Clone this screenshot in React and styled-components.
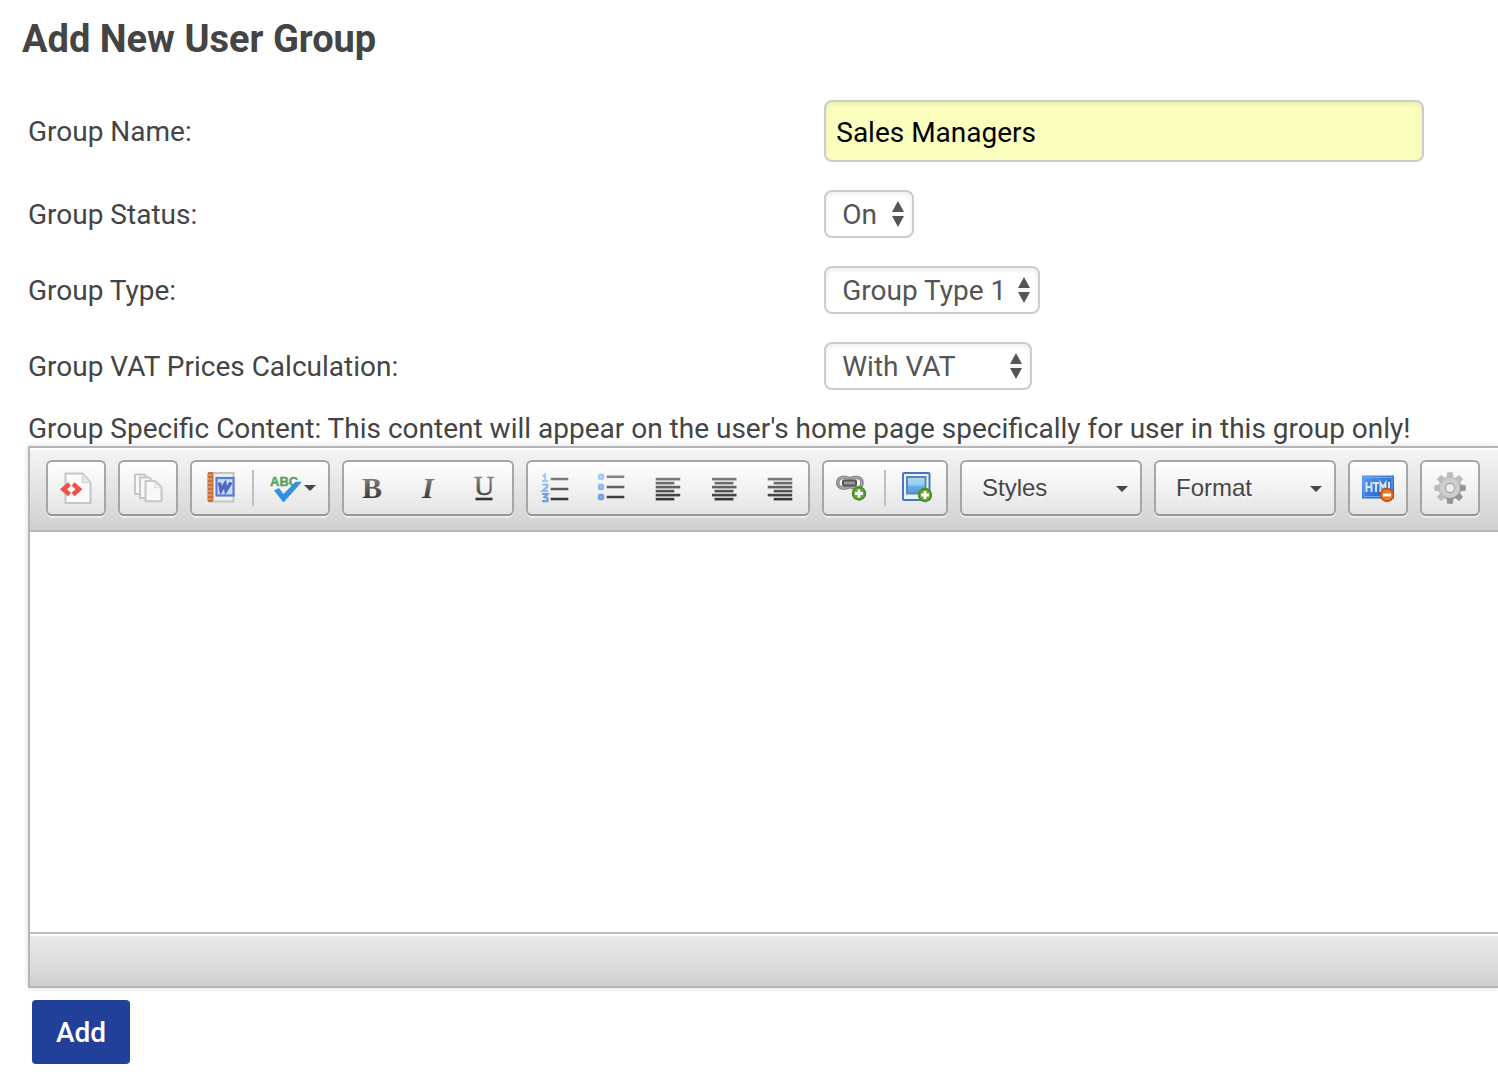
import React, { useState } from "react";
import styled, { createGlobalStyle } from "styled-components";

const statusOptions = ["On", "Off"];
const typeOptions = ["Group Type 1", "Group Type 2"];
const vatOptions = ["With VAT", "Without VAT"];
const styleOptions = ["Styles", "Big", "Small"];
const formatOptions = ["Format", "Normal", "Heading 1"];

const Ink = ({ id }) => (
  <linearGradient id={id} gradientUnits="userSpaceOnUse" x1="0" y1="4" x2="0" y2="30">
    <stop offset="0" stopColor="#858585" />
    <stop offset="1" stopColor="#2c2c2c" />
  </linearGradient>
);

const Badge = ({ cx, cy, minus }) => (
  <g>
    <circle cx={cx} cy={cy} r="7.2" fill={minus ? "#c9500f" : "#478a26"} />
    <circle cx={cx} cy={cy} r="5.6" fill={minus ? "#ee7a26" : "#66a838"} />
    <path
      d={minus ? `M${cx - 4} ${cy}h8` : `M${cx - 4} ${cy}h8M${cx} ${cy - 4}v8`}
      stroke="#fff"
      strokeWidth="2.8"
    />
  </g>
);

const SourceIcon = () => (
  <Icon viewBox="0 0 32 32">
    <path d="M5.5 1.500h17l8 9v20.500h-25z" fill="#fbfbfb" stroke="#c6c6c6" strokeWidth="2" />
    <path d="M22.500 2v8.500h8" fill="#e8e8e8" stroke="#d4d4d4" strokeWidth="1.400" />
    <path
      d="M9.500 12l-6 5.200 6 5.200M13 12l6 5.200-6 5.200"
      fill="none"
      stroke="#f0524a"
      strokeWidth="4.600"
    />
  </Icon>
);

const TemplatesIcon = () => (
  <Icon viewBox="0 0 32 32">
    <g fill="#f8f8f8" stroke="#c6c6c6" strokeWidth="2" strokeLinejoin="round">
      <path d="M3 2.500h9l4 4v15.500H3z" />
      <path d="M8 5.500h9l5 5v15.500H8z" />
      <path d="M13.500 9h9.500l6.500 6v14.300h-16z" />
      <path d="M23 9.500v6h6.500" fill="none" stroke="#dcdcdc" strokeWidth="1.400" />
    </g>
  </Icon>
);

const WordIcon = () => (
  <Icon viewBox="0 0 32 32">
    <rect x="5" y="1" width="24.500" height="28.500" fill="#f0f0f0" stroke="#c4c4c4" strokeWidth="2" />
    <rect x="3.500" y="0" width="6" height="30" rx="2" fill="#c4703d" />
    <path d="M3.500 3h5M3.500 7h5M3.500 11h5M3.500 15h5M3.500 19h5M3.500 23h5M3.500 27h5" stroke="#dc9a6f" strokeWidth="1.400" />
    <rect x="12.500" y="6" width="17" height="17.500" fill="#cddbf7" stroke="#5b7cd6" strokeWidth="2.200" />
    <path d="M15.500 10.500l1.500 8 4-6.500 1 6.500 5-8" fill="none" stroke="#4c69c8" strokeWidth="3.400" />
  </Icon>
);

const SpellIcon = () => (
  <Icon viewBox="0 0 32 32">
    <IconText x="0" y="14" $size="13" $weight="700" fill="#5c9f60" stroke="#5c9f60" strokeWidth=".4">
      ABC
    </IconText>
    <path d="M4 18.500l5-2.500 4.500 6L25.500 9.700h6.500L13.500 30.500z" fill="#3291e2" />
  </Icon>
);

const BoldIcon = () => (
  <Icon viewBox="0 0 32 32">
    <Ink id="ink-b" />
    <IconText x="6" y="26" $serif $size="30" $weight="700" fill="url(#ink-b)">
      B
    </IconText>
  </Icon>
);

const ItalicIcon = () => (
  <Icon viewBox="0 0 32 32">
    <Ink id="ink-i" />
    <IconText x="10" y="26" $serif $italic $size="30" $weight="700" fill="url(#ink-i)">
      I
    </IconText>
  </Icon>
);

const UnderlineIcon = () => (
  <Icon viewBox="0 0 32 32">
    <Ink id="ink-u" />
    <IconText x="6" y="23" $serif $size="28" $weight="400" fill="url(#ink-u)" stroke="url(#ink-u)" strokeWidth=".5">
      U
    </IconText>
    <path d="M7.500 27h17" stroke="#333" strokeWidth="2.600" />
  </Icon>
);

const NumberedIcon = () => (
  <Icon viewBox="0 0 32 32">
    <Ink id="ink-n" />
    <g fill="none" strokeWidth="2.200">
      <path d="M2.500 4.500l2.500-2v7M2 9h6" stroke="#a5c8f5" />
      <path d="M2.500 12.500h4.500l.5 2-5 4.500h5.500" stroke="#8fb8ee" />
      <path d="M2 22h5.500l-3 3.200 3 .8v3.200H2" stroke="#6f9fe2" />
    </g>
    <path d="M10.700 5.700h17.600v2.600h-17.600zM10.700 15.700h17.600v2.600h-17.600zM10.700 25.700h17.600v2.600h-17.600z" fill="url(#ink-n)" />
  </Icon>
);

const BulletedIcon = () => (
  <Icon viewBox="0 0 32 32">
    <Ink id="ink-l" />
    <g fill="none" strokeWidth="2.400">
      <rect x="3" y="2.700" width="4" height="4" rx="1" fill="#c9def9" stroke="#a5c8f5" />
      <rect x="3" y="13" width="4" height="4" rx="1" fill="#b0cdf4" stroke="#8fb8ee" />
      <rect x="3" y="23" width="4" height="4" rx="1" fill="#9cbfee" stroke="#6f9fe2" />
    </g>
    <path d="M10.700 3.400h17.600v2.600h-17.600zM10.700 13.700h17.600v2.600h-17.600zM10.700 23.700h17.600v2.600h-17.600z" fill="url(#ink-l)" />
  </Icon>
);

const alignLines = {
  left: [3.7, 3.7, 18.6],
  center: [4, 6.5, 19],
  right: [3.7, 9.7, 18.6],
};

const AlignIcon = ({ side }) => {
  const [long, short, width] = alignLines[side];
  return (
    <Icon viewBox="0 0 32 32">
      <Ink id={`ink-${side}`} />
      <g fill={`url(#ink-${side})`}>
        {[7, 15, 23].map(y => (
          <React.Fragment key={y}>
            <rect x={long} y={y - 1.2} width="24.5" height="2.6" />
            <rect x={short} y={y + 2.8} width={width} height="2.6" />
          </React.Fragment>
        ))}
      </g>
    </Icon>
  );
};

const LinkIcon = () => (
  <Icon viewBox="0 0 32 32">
    <g fill="none">
      <rect x="1.800" y="5.500" width="13" height="10.500" rx="5" stroke="#868686" strokeWidth="3.600" />
      <rect x="13" y="5.500" width="13" height="10.500" rx="5" stroke="#868686" strokeWidth="3.600" />
      <rect x="1.800" y="5.500" width="13" height="10.500" rx="5" stroke="#b4b4b4" strokeWidth="1" />
      <rect x="13" y="5.500" width="13" height="10.500" rx="5" stroke="#b4b4b4" strokeWidth="1" />
      <rect x="7" y="8.500" width="13" height="5" rx="1" fill="#999" stroke="#555" strokeWidth="2" />
    </g>
    <Badge cx={23} cy={21.5} />
  </Icon>
);

const ImageIcon = () => (
  <Icon viewBox="0 0 32 32">
    <linearGradient id="sky" x1="0" y1="0" x2="0" y2="1">
      <stop offset="0" stopColor="#a6dcf6" />
      <stop offset=".45" stopColor="#95d0f2" />
      <stop offset=".6" stopColor="#64aae4" />
      <stop offset="1" stopColor="#5b9fdf" />
    </linearGradient>
    <rect x="1" y="1" width="26.500" height="27" rx="1" fill="#e9f1fb" stroke="#4a76be" strokeWidth="2" />
    <rect x="5" y="5" width="18.500" height="16.500" fill="url(#sky)" stroke="#5f87ad" strokeWidth="2" />
    <Badge cx={23} cy={23} />
  </Icon>
);

const HtmlIcon = () => (
  <Icon viewBox="0 0 32 32">
    <linearGradient id="html-bg" x1="0" y1="0" x2="1" y2="1">
      <stop offset="0" stopColor="#5c9bea" />
      <stop offset="1" stopColor="#1d57c2" />
    </linearGradient>
    <rect x="0" y="3.500" width="32" height="23" fill="url(#html-bg)" />
    <rect x="2" y="5.500" width="28" height="19" fill="none" stroke="#6ea6ee" strokeWidth="1" />
    <path
      d="M4.500 10v10M9.500 10v10M4.500 15h5M11 11h6M14 11v9M18.500 20v-9l2.500 4 2.500-4v9M27 10v9h3"
      fill="none"
      stroke="#d5e4fa"
      strokeWidth="2"
    />
    <Badge cx={25} cy={23} minus />
  </Icon>
);

const teeth = [0, 45, 90, 135, 180, 225, 270, 315];

const GearIcon = () => (
  <Icon viewBox="0 0 32 32">
    <linearGradient id="gear" gradientUnits="userSpaceOnUse" x1="4" y1="0" x2="24" y2="32">
      <stop offset="0" stopColor="#cfcfcf" />
      <stop offset=".5" stopColor="#bcbcbc" />
      <stop offset="1" stopColor="#8a8a8a" />
    </linearGradient>
    <circle cx="16" cy="16" r="11.500" fill="url(#gear)" />
    {teeth.map(angle => (
      <path
        key={angle}
        d="M12.500 6l.7-5.700h5.600l.7 5.700z"
        fill={angle > 80 && angle < 200 ? "#959595" : "#bcbcbc"}
        transform={`rotate(${angle} 16 16)`}
      />
    ))}
    <circle cx="16" cy="16" r="10" fill="#cdcdcd" />
    <circle cx="16" cy="16" r="4.600" fill="#efefef" stroke="#b0b0b0" strokeWidth="1.600" />
  </Icon>
);

const Caret = () => (
  <CaretSvg viewBox="0 0 12 6">
    <path d="M0 0h12L6 6z" />
  </CaretSvg>
);

const SelectField = ({ id, options, width }) => (
  <SelectWrap $width={width}>
    <select id={id}>
      {options.map(option => (
        <option key={option}>{option}</option>
      ))}
    </select>
    <svg viewBox="0 0 12 26" aria-hidden="true">
      <path d="M6 0l6 11H0zM0 15h12L6 26z" />
    </svg>
  </SelectWrap>
);

const ToolCombo = ({ label, options }) => (
  <Combo>
    <select aria-label={label}>
      {options.map(option => (
        <option key={option}>{option}</option>
      ))}
    </select>
    <Caret />
  </Combo>
);

const Tool = ({ label, wide, children }) => (
  <ToolButton type="button" title={label} aria-label={label} $wide={wide}>
    {children}
  </ToolButton>
);

const App = () => {
  const [name, setName] = useState("Sales Managers");
  const [content, setContent] = useState("");

  return (
    <>
      <GlobalStyle />
      <Page onSubmit={e => e.preventDefault()}>
        <Title>Add New User Group</Title>
        <Fields>
          <Label htmlFor="group-name">Group Name:</Label>
          <NameInput id="group-name" type="text" value={name} onChange={e => setName(e.target.value)} />
          <Label htmlFor="group-status">Group Status:</Label>
          <SelectField id="group-status" options={statusOptions} width={90} />
          <Label htmlFor="group-type">Group Type:</Label>
          <SelectField id="group-type" options={typeOptions} width={216} />
          <Label htmlFor="group-vat">Group VAT Prices Calculation:</Label>
          <SelectField id="group-vat" options={vatOptions} width={208} />
        </Fields>
        <ContentLabel htmlFor="group-content">
          Group Specific Content: This content will appear on the user's home page specifically for user in this group only!
        </ContentLabel>
        <Editor>
          <Toolbar>
            <ToolGroup>
              <Tool label="Source"><SourceIcon /></Tool>
            </ToolGroup>
            <ToolGroup>
              <Tool label="Templates"><TemplatesIcon /></Tool>
            </ToolGroup>
            <ToolGroup>
              <Tool label="Paste from Word"><WordIcon /></Tool>
              <Separator />
              <Tool label="Spell Check" wide>
                <SpellIcon />
                <Caret />
              </Tool>
            </ToolGroup>
            <ToolGroup>
              <Tool label="Bold"><BoldIcon /></Tool>
              <Tool label="Italic"><ItalicIcon /></Tool>
              <Tool label="Underline"><UnderlineIcon /></Tool>
            </ToolGroup>
            <ToolGroup>
              <Tool label="Numbered List"><NumberedIcon /></Tool>
              <Tool label="Bulleted List"><BulletedIcon /></Tool>
              <Tool label="Align Left"><AlignIcon side="left" /></Tool>
              <Tool label="Center"><AlignIcon side="center" /></Tool>
              <Tool label="Align Right"><AlignIcon side="right" /></Tool>
            </ToolGroup>
            <ToolGroup>
              <Tool label="Link"><LinkIcon /></Tool>
              <Separator />
              <Tool label="Image"><ImageIcon /></Tool>
            </ToolGroup>
            <ToolCombo label="Styles" options={styleOptions} />
            <ToolCombo label="Format" options={formatOptions} />
            <ToolGroup>
              <Tool label="Remove HTML"><HtmlIcon /></Tool>
            </ToolGroup>
            <ToolGroup>
              <Tool label="Settings"><GearIcon /></Tool>
            </ToolGroup>
          </Toolbar>
          <ContentArea id="group-content" value={content} onChange={e => setContent(e.target.value)} />
          <StatusBar />
        </Editor>
        <AddButton type="submit">Add</AddButton>
      </Page>
    </>
  );
};

export default App;

const GlobalStyle = createGlobalStyle`
  * {
    box-sizing: border-box;
  }
  body {
    margin: 0;
    background: #fff;
    color: #444;
    font-family: Roboto, sans-serif;
    font-size: 28px;
    line-height: 36px;
  }
`;

const Page = styled.form`
  padding: 15px 0 28px 28px;
`;

const Title = styled.h1`
  margin: 0 0 37px -6px;
  font-size: 38px;
  line-height: 48px;
  font-weight: 700;
`;

const Fields = styled.div`
  display: grid;
  grid-template-columns: minmax(0, 13fr) minmax(0, 11fr);
  align-items: center;
  row-gap: 28px;
`;

const Label = styled.label`
  padding-top: 2px;
`;

const ContentLabel = styled.label`
  display: block;
  margin-top: 22px;
  line-height: 34px;
`;

const NameInput = styled.input`
  width: 100%;
  max-width: 600px;
  height: 62px;
  padding: 2px 10px 0;
  border: 2px solid #ccc;
  border-radius: 8px;
  background: #faffbd;
  box-shadow: inset 0 2px 4px rgba(0, 0, 0, 0.08);
  color: #000;
  font: inherit;
`;

const SelectWrap = styled.div`
  position: relative;
  width: ${({ $width }) => $width}px;

  select {
    appearance: none;
    display: block;
    width: 100%;
    height: 48px;
    padding: 2px 0 0 16px;
    border: 2px solid #ccc;
    border-radius: 8px;
    background: #fff;
    box-shadow: inset 0 2px 4px rgba(0, 0, 0, 0.08);
    color: #555;
    font: inherit;
  }

  svg {
    position: absolute;
    top: 11px;
    right: 10px;
    width: 12px;
    height: 26px;
    fill: #555;
    pointer-events: none;
  }
`;

const Editor = styled.section`
  border: 2px solid #b6b6b6;
  border-right: 0;
  box-shadow: 0 0 6px rgba(0, 0, 0, 0.15);
`;

const Toolbar = styled.div`
  display: flex;
  flex-wrap: wrap;
  gap: 12px;
  padding: 12px 16px 14px;
  border-bottom: 2px solid #b6b6b6;
  background: linear-gradient(#f5f5f5, #cfd1cf);
  box-shadow: inset 0 2px 0 #fff;
`;

const ToolGroup = styled.div`
  display: flex;
  align-items: center;
  height: 56px;
  border: 2px solid #a6a6a6;
  border-bottom-color: #979797;
  border-radius: 6px;
  background: linear-gradient(#fff, #e4e4e4);
  box-shadow: 0 2px 0 rgba(255, 255, 255, 0.5);
`;

const ToolButton = styled.button`
  display: flex;
  align-items: center;
  gap: 2px;
  width: ${({ $wide }) => ($wide ? 70 : 56)}px;
  height: 52px;
  padding: 0 12px;
  border: 0;
  background: transparent;
  cursor: pointer;
`;

const Separator = styled.span`
  width: 2px;
  height: 36px;
  margin: 0 4px;
  background: #c0c0c0;
`;

const Icon = styled.svg.attrs({ "aria-hidden": true })`
  flex: none;
  width: 32px;
  height: 32px;
  overflow: visible;
`;

const IconText = styled.text`
  font-family: ${({ $serif }) => ($serif ? '"Liberation Serif", serif' : '"Liberation Sans", sans-serif')};
  font-size: ${({ $size }) => $size}px;
  font-weight: ${({ $weight }) => $weight};
  font-style: ${({ $italic }) => ($italic ? "italic" : "normal")};
`;

const CaretSvg = styled.svg.attrs({ "aria-hidden": true })`
  flex: none;
  width: 12px;
  height: 6px;
  fill: #474747;
`;

const Combo = styled(ToolGroup)`
  position: relative;
  width: 182px;

  select {
    appearance: none;
    width: 100%;
    height: 52px;
    padding: 0 0 2px 20px;
    border: 0;
    background: transparent;
    color: #474747;
    font-family: "Liberation Sans", Arial, sans-serif;
    font-size: 24px;
    text-shadow: 0 2px 0 rgba(255, 255, 255, 0.5);
  }

  svg {
    position: absolute;
    top: 24px;
    right: 12px;
    pointer-events: none;
  }
`;

const ContentArea = styled.textarea`
  display: block;
  width: 100%;
  height: 400px;
  padding: 20px;
  border: 0;
  outline: 0;
  resize: none;
  background: #fff;
  color: inherit;
  font: inherit;
`;

const StatusBar = styled.div`
  height: 54px;
  border-top: 2px solid #bfbfbf;
  background: linear-gradient(#ebebeb, #cfd1cf);
  box-shadow: inset 0 2px 0 #fff;
`;

const AddButton = styled.button`
  height: 64px;
  margin: 12px 0 0 4px;
  padding: 0 24px;
  border: 0;
  border-radius: 4px;
  background: #204099;
  color: #fff;
  font-family: inherit;
  font-size: 28px;
  font-weight: 500;
  cursor: pointer;
`;
